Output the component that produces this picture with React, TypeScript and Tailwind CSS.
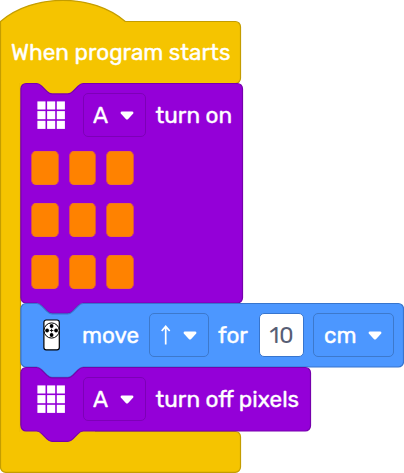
import type { ReactNode } from "react";

const NOTCH = "c2.6 0 3.9 1.3 5.2 2.6l5.2 5.2c1.3 1.3 2.6 2.6 5.2 2.6h15.6c2.6 0 3.9 -1.3 5.2 -2.6l5.2 -5.2c1.3 -1.3 2.6 -2.6 5.2 -2.6";
const TAB = "c-2.6 0 -3.9 1.3 -5.2 2.6l-5.2 5.2c-1.3 1.3 -2.6 2.6 -5.2 2.6h-15.6c-2.6 0 -3.9 -1.3 -5.2 -2.6l-5.2 -5.2c-1.3 -1.3 -2.6 -2.6 -5.2 -2.6";

function blockPath(w: number, h: number) {
  return `M.9 5.7a5.2 5.2 0 0 1 5.2 -5.2H16.5${NOTCH}H${w - 5.7}a5.2 5.2 0 0 1 5.2 5.2V${h - 5.2}a5.2 5.2 0 0 1 -5.2 5.2H63.3${TAB}H6.1a5.2 5.2 0 0 1 -5.2 -5.2z`;
}

function Block({ w, h, fill, stroke, className, children }: { w: number; h: number; fill: string; stroke: string; className: string; children: ReactNode }) {
  return (
    <section className={`relative ${className}`}>
      <svg className="absolute left-0 top-0 overflow-visible" width={w} height={h + 12}>
        <path d={blockPath(w, h)} fill={fill} stroke={stroke} strokeWidth="1.2" />
      </svg>
      <div className="relative">{children}</div>
    </section>
  );
}

function Caret() {
  return (
    <svg width="14" height="9" viewBox="0 0 14 9" className="mt-px shrink-0">
      <path d="M1.7.5H12.3Q14 .8 13.2 2.4L8.2 7.9Q7 9 5.8 7.9L.8 2.4Q0 .8 1.7.5z" fill="#fff" />
    </svg>
  );
}

function GridIcon() {
  return (
    <svg width="28" height="28" viewBox="0 0 28 28" fill="#fff">
      {[0.4, 10.1, 19.8].map((y) => [0.4, 10.1, 19.8].map((x) => <rect key={`${x} ${y}`} x={x} y={y} width="8.1" height="8.1" />))}
    </svg>
  );
}

function PortField() {
  return (
    <div className="ml-[18px] flex h-[44px] w-[63px] items-center rounded-[5px] border border-[#7d00b7] pl-[9px]">
      <span className="w-[27px] pt-[2px]">A</span>
      <Caret />
    </div>
  );
}

function RobotIcon() {
  return (
    <svg width="18" height="32" viewBox="0 0 18 32">
      <rect x=".9" y="1" width="15.4" height="29.8" rx="2.3" fill="#fff" stroke="#000" strokeWidth="1.2" />
      <circle cx="8.6" cy="11.5" r="7.6" fill="#fff" stroke="#000" strokeWidth="1" />
      <g fill="#000">
        <circle cx="8.6" cy="7" r="1.9" />
        <circle cx="8.6" cy="16" r="1.9" />
        <circle cx="4.1" cy="11.5" r="1.9" />
        <circle cx="13.1" cy="11.5" r="1.9" />
      </g>
      <path d="M8.6 9.7v3.6M6.8 11.5h3.6" stroke="#000" strokeWidth=".9" />
    </svg>
  );
}

export default function App() {
  return (
    <main className="relative h-[473px] w-[404px] overflow-hidden bg-white font-['Rubik','Roboto',sans-serif] text-[22.5px] font-normal leading-none text-white [-webkit-text-stroke:0.4px_currentColor]">
      <svg className="absolute left-0 top-0" width="404" height="473">
        <path
          d="M.5 21.5c32.5 -28.2 92.3 -28.2 124.8 0H235.3a5.2 5.2 0 0 1 5.2 5.2V78.3a5.2 5.2 0 0 1 -5.2 5.2H20.5V431.5H235.3a5.2 5.2 0 0 1 5.2 5.2V467.1a5.2 5.2 0 0 1 -5.2 5.2H5.7a5.2 5.2 0 0 1 -5.2 -5.2z"
          fill="#f5c400"
          stroke="#c49d00"
          strokeWidth="1.2"
        />
        <path d="M20 80H60V110H20zM20 425H95V445H20z" fill="#f5c400" />
        <path d="M40 80H88V95H40z" fill="#f5c400" />
      </svg>
      <header className="relative h-[83px] pl-[11px] pt-[42px]">
        <span className="whitespace-nowrap">When program starts</span>
      </header>
      <div className="ml-[20px]">
        <Block w={223} h={220} fill="#9400d8" stroke="#7600ad" className="h-[220px] w-[223px]">
          <div className="flex h-[64px] items-center pl-[17px]">
            <GridIcon />
            <PortField />
            <span className="ml-[9.5px] whitespace-nowrap pt-[2px]">turn on</span>
          </div>
          <div className="ml-[11px] mt-[4px] grid w-[103px] grid-cols-3 gap-x-[10px] gap-y-[18px]">
            {Array.from({ length: 9 }, (_, i) => (
              <div key={i} className="h-[34px] rounded-[5px] border border-[#d94c55] border-y-[#f07525] bg-[#ff8200]" />
            ))}
          </div>
        </Block>
        <Block w={384} h={64} fill="#4c97ff" stroke="#3775ce" className="h-[64px] w-[384px]">
          <div className="flex h-[64px] items-center">
            <div className="w-[62px] pl-[23px]"><RobotIcon /></div>
            <span className="w-[67px] pt-[2px]">move</span>
            <div className="flex h-[44px] w-[60px] items-center rounded-[5px] border border-[#3d79cc] pl-[10px]">
              <svg width="11" height="21" viewBox="0 0 11 21" className="mr-[12px]" fill="none" stroke="#fff" strokeWidth="1.7">
                <path d="M5.7 19.5V1.5M1.7 6L5.7 1.4L9.7 6" />
              </svg>
              <Caret />
            </div>
            <span className="ml-[9px] w-[41px] pt-[2px]">for</span>
            <div className="flex h-[44px] w-[45px] items-center justify-center rounded-[5px] border border-[#3775ce] bg-white pt-[2px] text-[#575e75] [-webkit-text-stroke:0px]">10</div>
            <div className="ml-[9px] flex h-[44px] w-[81px] items-center rounded-[5px] border border-[#3d79cc] pl-[10px]">
              <span className="w-[44px] pt-[2px]">cm</span>
              <Caret />
            </div>
          </div>
        </Block>
        <Block w={291} h={64} fill="#9400d8" stroke="#7600ad" className="h-[64px] w-[291px]">
          <div className="flex h-[64px] items-center pl-[17px]">
            <GridIcon />
            <PortField />
            <span className="ml-[9.5px] whitespace-nowrap pt-[2px]">turn off pixels</span>
          </div>
        </Block>
      </div>
    </main>
  );
}
